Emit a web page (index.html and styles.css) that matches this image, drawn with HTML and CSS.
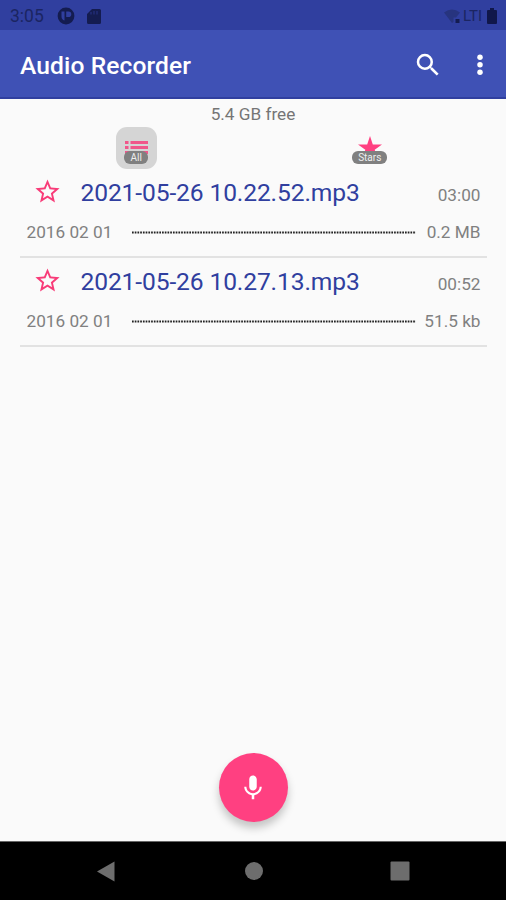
FILE: index.html
```html
<!DOCTYPE html>
<html lang="en">
<head>
<meta charset="utf-8">
<title>Audio Recorder</title>
<link rel="stylesheet" href="styles.css">
</head>
<body>
<div class="screen">
  <div class="status">
    <span class="clock">3:05</span>
    <svg class="st-app" width="18" height="18" viewBox="0 0 18 18"><circle cx="9" cy="9" r="8.400" fill="#141c50"/><path d="M4.500 4.500h3v9c-2-.5-3-2-3-4zM9.200 4.500h2.300a2.800 2.800 0 0 1 0 5.600H9.200z" fill="#303f9f"/></svg>
    <svg class="st-sd" width="14" height="17" viewBox="0 0 14 17"><path d="M5 1h7.500a1.500 1.500 0 0 1 1.500 1.500v12a1.500 1.500 0 0 1-1.500 1.500h-11A1.500 1.500 0 0 1 0 14.500V6z" fill="#141c50"/><path d="M4 4v2.500M7 3v3.500M10 3v3.500" stroke="#263388" stroke-width="1"/></svg>
    <span class="grow"></span>
    <svg class="st-wifi" width="16" height="15" viewBox="0 0 16 15"><path d="M0 3.500Q8-2.500 16 3.500L12 8.500H9.500V13L8 14z" fill="#27347f"/><path d="M11.500 10h4v4h-4z" fill="#141c50"/></svg>
    <span class="lte">LTI</span>
    <svg class="st-bat" width="10" height="16" viewBox="0 0 10 16"><path d="M3 0h4v2h2q1 0 1 1v12q0 1-1 1H1q-1 0-1-1V3q0-1 1-1h2z" fill="#10174a"/></svg>
  </div>
  <header class="bar">
    <h1>Audio Recorder</h1>
    <svg class="search" width="30" height="30" viewBox="0 0 24 24"><path fill="#fff" d="M15.500 14h-.79l-.28-.27A6.470 6.470 0 0 0 16 9.500 6.500 6.500 0 1 0 9.500 16c1.610 0 3.090-.59 4.230-1.570l.27.28v.79l5 4.990L20.490 19zm-6 0a4.500 4.500 0 1 1 0-9 4.500 4.500 0 0 1 0 9z"/></svg>
    <svg class="more" width="30" height="30" viewBox="0 0 24 24"><g fill="#fff"><circle cx="12" cy="5.800" r="2.200"/><circle cx="12" cy="11.800" r="2.200"/><circle cx="12" cy="17.800" r="2.200"/></g></svg>
  </header>
  <main>
    <div class="free">5.4 GB free</div>
    <div class="tabs">
      <div class="tab"><div class="chip on">
        <svg width="23" height="14" viewBox="0 0 23 14"><g fill="#f0568a"><path d="M0 1h3.500v3H0zM5.500 1H23v3H5.500zM0 6h3.500v3H0zM5.500 6H23v3H5.500zM0 11h23v3H0z"/></g></svg>
        <span class="tag all">All</span>
      </div></div>
      <div class="tab"><div class="chip">
        <svg width="24" height="23" viewBox="0 0 24 23"><path fill="#ff4081" d="M12 0l2.800 8.500H24l-7.300 5.300 2.800 8.700-7.500-5.300-7.500 5.300 2.800-8.700L0 8.500h9.200z"/></svg>
        <span class="tag stars">Stars</span>
      </div></div>
    </div>
    <ul>
      <li>
        <div class="row top">
          <svg class="star" width="29" height="29" viewBox="0 0 24 24"><path fill="#f83b78" d="M22 9.240l-7.190-.62L12 2 9.190 8.630 2 9.240l5.460 4.730L5.820 21 12 17.270 18.180 21l-1.630-7.030zM12 15.400l-3.760 2.270 1-4.280-3.320-2.880 4.380-.38L12 6.100l1.710 4.040 4.380.38-3.320 2.880 1 4.280z"/></svg>
          <span class="name">2021-05-26 10.22.52.mp3</span><span class="len">03:00</span>
        </div>
        <div class="row meta"><span class="date">2016 02 01</span><svg class="dots" width="285" height="3"><path d="M0 1.500h284"/></svg><span class="size">0.2 MB</span></div>
      </li>
      <li>
        <div class="row top">
          <svg class="star" width="29" height="29" viewBox="0 0 24 24"><path fill="#f83b78" d="M22 9.240l-7.190-.62L12 2 9.190 8.630 2 9.240l5.460 4.730L5.820 21 12 17.270 18.180 21l-1.630-7.030zM12 15.400l-3.760 2.270 1-4.280-3.320-2.880 4.380-.38L12 6.100l1.710 4.040 4.380.38-3.320 2.880 1 4.280z"/></svg>
          <span class="name">2021-05-26 10.27.13.mp3</span><span class="len">00:52</span>
        </div>
        <div class="row meta"><span class="date">2016 02 01</span><svg class="dots" width="285" height="3"><path d="M0 1.500h284"/></svg><span class="size">51.5 kb</span></div>
      </li>
    </ul>
    <button class="fab" aria-label="Record"><svg width="30" height="30" viewBox="0 0 24 24"><path fill="#fff" d="M12 14c1.660 0 2.990-1.340 2.990-3L15 5c0-1.660-1.340-3-3-3S9 3.340 9 5v6c0 1.660 1.340 3 3 3zm5.300-3c0 3-2.540 5.100-5.300 5.100S6.700 14 6.700 11H5c0 3.410 2.720 6.230 6 6.720V21h2v-3.280c3.280-.48 6-3.300 6-6.720z"/></svg></button>
  </main>
  <nav>
    <svg width="18" height="21" viewBox="0 0 18 21"><path fill="#6d6d6d" d="M17.500.5v20L0 10.500z"/></svg>
    <svg width="18" height="18" viewBox="0 0 18 18"><circle cx="9" cy="9" r="9" fill="#6d6d6d"/></svg>
    <svg width="20" height="20" viewBox="0 0 20 20"><rect x=".5" y=".5" width="19" height="19" rx="1" fill="#6d6d6d"/></svg>
  </nav>
</div>
</body>
</html>
```
FILE: styles.css
```css
* { box-sizing: border-box; }
body { margin: 0; font-family: Roboto, "Liberation Sans", sans-serif; }
svg { display: block; flex: none; }
.screen { width: 506px; height: 900px; display: flex; flex-direction: column; background: #fafafa; }

.status { height: 30px; background: #303f9f; display: flex; align-items: center; padding: 2px 9px 0 10px; color: #1b2562; }
.clock { width: 47px; font-size: 17.5px; line-height: 26px; }
.st-sd { margin-left: 12px; }
.grow { flex: 1; }
.st-wifi { margin-right: 3px; }
.lte { width: 24px; font-size: 15px; }

.bar { height: 69px; background: #3f51b5; border-bottom: 2px solid #303f9f; display: flex; align-items: center; padding: 3px 11px 0 20px; }
h1 { flex: 1; margin: 2px 0 0; font-size: 24.6px; line-height: 30px; font-weight: 500; letter-spacing: .1px; color: #fff; }
.more { margin-left: 22px; }

main { height: 742px; display: flex; flex-direction: column; align-items: center; }
.free { font-size: 17.2px; line-height: 20px; margin-top: 5px; color: #757575; }
.tabs { width: 467px; display: flex; margin-top: 3px; }
.tab { flex: 1; display: flex; justify-content: center; }
.chip { width: 41px; height: 42px; border-radius: 11px; display: flex; flex-direction: column; align-items: center; padding-top: 9px; }
.chip.on { background: #d5d5d5; padding-top: 13px; }
.tag { background: #808080; color: #eee; border-radius: 6px; font-size: 10px; line-height: 13px; height: 13px; text-align: center; z-index: 1; flex: none; }
.all { width: 24px; margin-top: -3px; }
.stars { width: 35px; margin-top: -8px; }

ul { list-style: none; margin: 0; padding: 0; width: 467px; }
li { height: 89px; border-bottom: 2px solid #e2e2e2; padding: 4px 6px 0 7px; }
.row { display: flex; align-items: center; }
.top { height: 40px; padding-left: 6px; }
.star { margin-top: -3px; }
.name { flex: 1; margin-left: 19px; font-size: 24.6px; line-height: 30px; letter-spacing: -.12px; color: #303f9f; white-space: nowrap; }
.len { margin-top: 3px; }
.len, .meta { font-size: 17.2px; line-height: 20px; color: #808080; white-space: nowrap; }
.meta { height: 20px; margin-top: 9px; }
.date { width: 105px; }
.dots path { stroke: #222; stroke-width: 2; stroke-dasharray: 1.7 1.03; }
.size { flex: 1; text-align: right; }

.fab { margin: auto 0 19px; width: 69px; height: 69px; padding: 0; border: 0; border-radius: 50%; background: #ff4081; box-shadow: 0 6px 8px rgba(0, 0, 0, .22); display: flex; align-items: center; justify-content: center; }

nav { height: 59px; background: #000; border-top: 1px solid #666; display: flex; align-items: center; justify-content: space-between; padding: 0 96px 0 97px; }
nav svg:nth-child(2) { margin-left: 2px; }
```
